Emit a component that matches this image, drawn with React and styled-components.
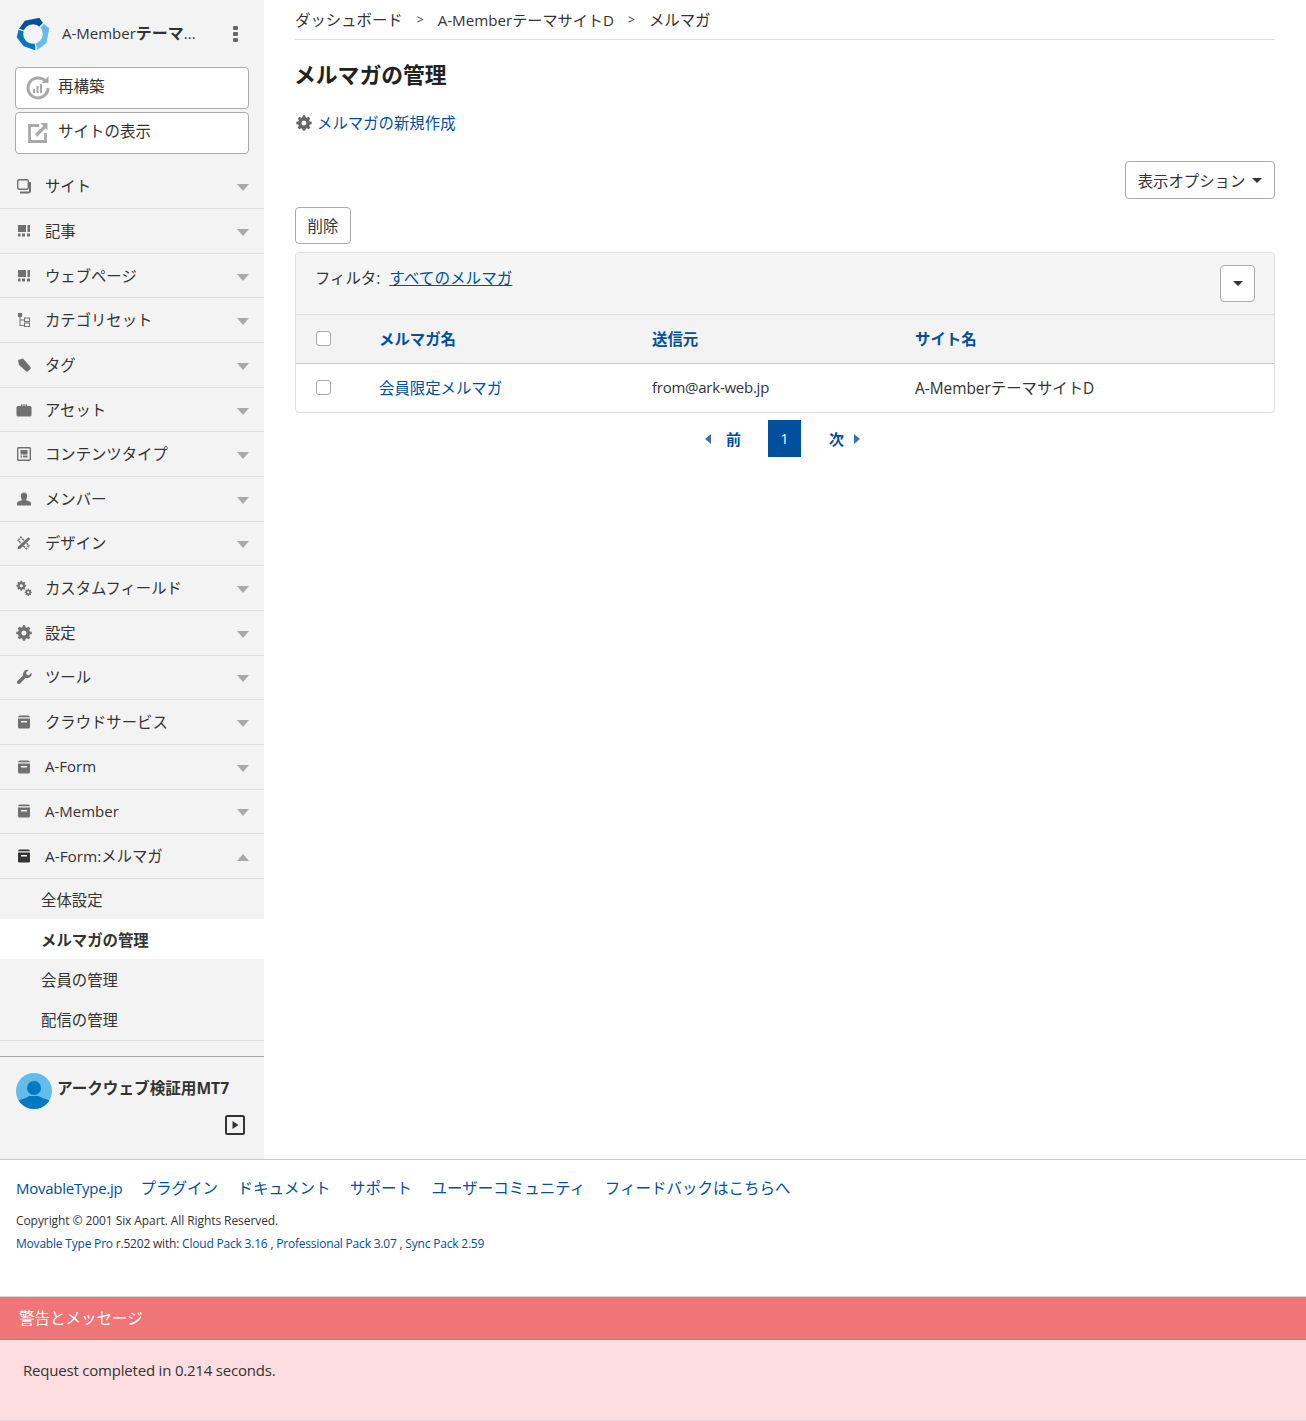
import React from "react";
import styled, { createGlobalStyle } from "styled-components";

const GlobalStyle = createGlobalStyle`
  body {
    margin: 0;
    background: #fff;
    color: #333;
    font-family: "Open Sans", "Noto Sans CJK JP", sans-serif;
    font-size: 15.4px;
  }
  a {
    color: #00509e;
    text-decoration: none;
  }
`;

const NAV_ITEMS = [
  ["サイト", "site"],
  ["記事", "grid"],
  ["ウェブページ", "grid"],
  ["カテゴリセット", "tree"],
  ["タグ", "tag"],
  ["アセット", "case"],
  ["コンテンツタイプ", "ctype"],
  ["メンバー", "user"],
  ["デザイン", "design"],
  ["カスタムフィールド", "gears"],
  ["設定", "gear"],
  ["ツール", "wrench"],
  ["クラウドサービス", "box"],
  ["A-Form", "box"],
  ["A-Member", "box"],
];

const SUB_ITEMS = ["全体設定", "メルマガの管理", "会員の管理", "配信の管理"];

const FOOTER_LINKS = [
  "プラグイン",
  "ドキュメント",
  "サポート",
  "ユーザーコミュニティ",
  "フィードバックはこちらへ",
];

const GEAR =
  "M16 10.2v-2.4l-2-.4a6 6 0 0 0-.5-1.3l1.1-1.7-1.7-1.7-1.7 1.1a6 6 0 0 0-1.3-.5L9.5 1.3H7.1l-.4 2a6 6 0 0 0-1.3.5L3.7 2.7 2 4.4l1.1 1.7a6 6 0 0 0-.5 1.3l-2 .4v2.4l2 .4c.1.5.3.9.5 1.3L2 13.6l1.7 1.7 1.7-1.1c.4.2.8.4 1.3.5l.4 2h2.4l.4-2c.5-.1.9-.3 1.3-.5l1.7 1.1 1.7-1.7-1.1-1.7c.2-.4.4-.8.5-1.3zM8.3 11.5a2.5 2.5 0 1 1 0-5 2.5 2.500 0 0 1 0 5z";

const NavIcon = ({ type, color = "#707070" }) => {
  switch (type) {
    case "site":
      return (
        <svg width="16" height="16" viewBox="0 0 16 16">
          <rect x="1.700" y="1.700" width="10.600" height="9.600" rx="1.500" fill="none" stroke={color} strokeWidth="1.400" />
          <path d="M14 4v9a1.500 1.500 0 0 1-1.500 1.500H4" fill="none" stroke={color} strokeWidth="2" />
        </svg>
      );
    case "grid":
      return (
        <svg width="16" height="16" viewBox="0 0 16 16" fill={color}>
          <rect x="2" y="2" width="8" height="7" />
          <rect x="11.500" y="2" width="2.500" height="7" />
          <rect x="2" y="10.500" width="2.500" height="3" />
          <rect x="6" y="10.500" width="3" height="3" />
          <rect x="11" y="10.500" width="3" height="3" />
        </svg>
      );
    case "tree":
      return (
        <svg width="16" height="16" viewBox="0 0 16 16" fill={color}>
          <rect x="2" y="1" width="4" height="4" />
          <path d="M3.500 5h1v8H8v1H3.500zM4 7.500h4v1H4z" />
          <rect x="8.500" y="6" width="5" height="3.500" fill="none" stroke={color} />
          <rect x="8.500" y="11" width="5" height="3.500" fill="none" stroke={color} />
        </svg>
      );
    case "tag":
      return (
        <svg width="16" height="16" viewBox="0 0 16 16" fill={color}>
          <path d="M2 3l5-1.500 7.500 8.500a1.500 1.500 0 0 1-.2 2l-2.300 2.300a1.500 1.500 0 0 1-2 0L3 8z" />
        </svg>
      );
    case "case":
      return (
        <svg width="16" height="16" viewBox="0 0 16 16" fill={color}>
          <path d="M5 4V2.500h6V4h-1V3.500H6V4z" />
          <rect x="0.500" y="4" width="15" height="10.500" rx="1.500" />
        </svg>
      );
    case "ctype":
      return (
        <svg width="16" height="16" viewBox="0 0 16 16">
          <rect x="1.700" y="1.700" width="12.600" height="12.600" rx="1" fill="none" stroke={color} strokeWidth="1.400" />
          <rect x="4.500" y="4" width="7" height="4.500" fill={color} />
          <rect x="4.500" y="9.500" width="1.500" height="2" fill={color} />
          <rect x="7" y="9.500" width="4.500" height="2" fill={color} />
        </svg>
      );
    case "user":
      return (
        <svg width="16" height="16" viewBox="0 0 16 16" fill={color}>
          <path d="M8 1.500c2 0 3.200 1.500 3.200 3.500S10.300 8 9.800 9c.8.800 4.700 1 5.200 3v2.500H1V12c.5-2 4.400-2.200 5.200-3-.5-1-1.400-2-1.400-4S6 1.500 8 1.500z" />
        </svg>
      );
    case "design":
      return (
        <svg width="16" height="16" viewBox="-1 -1 18 18" fill={color}>
          <path d="M1.500 5l3-3.500 9 9.500-3 3.500z" fill="none" stroke={color} strokeWidth="1.800" strokeDasharray="2.500 1" />
          <path d="M13 1.500l2 2L4 14.500l-3 .5.500-3z" />
        </svg>
      );
    case "gears":
      return (
        <svg width="16" height="16" viewBox="0 0 16 16">
          <g fill={color} transform="scale(.64)"><path d={GEAR} /></g>
          <g fill={color} transform="translate(8.400 8.200) scale(.46)"><path d={GEAR} /></g>
        </svg>
      );
    case "gear":
      return (
        <svg width="16" height="16" viewBox="0.300 1 16 16" fill={color}>
          <path d={GEAR} />
        </svg>
      );
    case "wrench":
      return (
        <svg width="16" height="16" viewBox="0 0 16 16" fill={color}>
          <path d="M15.500 3.800l-2.600 2.500-2.200-.6-.6-2.200L12.600 1a4.300 4.300 0 0 0-5.400 5.300L1.200 12.200a1.900 1.900 0 0 0 2.600 2.600l6-6a4.300 4.300 0 0 0 5.700-5z" />
        </svg>
      );
    default:
      return (
        <svg width="16" height="16" viewBox="0 0 16 16" fill={color}>
          <path d="M4 1.500h8a2 2 0 0 1 2 1.800H2a2 2 0 0 1 2-1.800z" />
          <path d="M2 4.500h12v8.500a1.500 1.500 0 0 1-1.500 1.500h-9A1.500 1.500 0 0 1 2 13zM5 7v1.500h6V7z" fillRule="evenodd" />
        </svg>
      );
  }
};

const Logo = () => (
  <svg width="34" height="34" viewBox="0 0 34 34" stroke="#f3f3f3" strokeWidth="1.300">
    <path d="M17 17L2 12 8.500 3 23.500 0 28 6.500z" fill="#00519e" />
    <path d="M17 17L2 12 0 20.500 7 29.500 19.500 34 21 28z" fill="#0079c1" />
    <path d="M17 17L28 6 34 11 31 26.500 21 34z" fill="#63bcec" />
    <circle cx="17" cy="17" r="9.800" fill="#f3f3f3" stroke="none" />
  </svg>
);

const App = () => (
  <>
    <GlobalStyle />
    <Layout>
      <Sidebar>
        <SiteHeader>
          <Logo />
          <SiteName>
            A-Member<b>テーマ</b>...
          </SiteName>
          <Kebab>
            <i />
            <i />
            <i />
          </Kebab>
        </SiteHeader>
        <SideButton>
          <svg width="26" height="26" viewBox="0 0 26 26" fill="none">
            <path d="M23 13a10 10 0 1 1-3-7.200" stroke="#a9a9a9" strokeWidth="3" />
            <path d="M16.500 8h7V1z" fill="#a9a9a9" />
            <rect x="8" y="14" width="2" height="4" fill="#a9a9a9" />
            <rect x="11.500" y="11" width="2" height="7" fill="#a9a9a9" />
            <rect x="15" y="9" width="2" height="9" fill="#a9a9a9" />
          </svg>
          <SideButtonText>再構築</SideButtonText>
        </SideButton>
        <SideButton>
          <svg width="26" height="26" viewBox="0 0 26 26" fill="none">
            <path d="M14 5.500H4.500v16h16V13" stroke="#a9a9a9" strokeWidth="2.800" />
            <path d="M11 15.500L20 6.500" stroke="#a9a9a9" strokeWidth="3.200" />
            <path d="M15.500 3h7v7z" fill="#a9a9a9" />
          </svg>
          <SideButtonText>サイトの表示</SideButtonText>
        </SideButton>
        <NavList>
          {NAV_ITEMS.map(([label, icon]) => (
            <NavRow key={label}>
              <NavIconBox>
                <NavIcon type={icon} />
              </NavIconBox>
              <NavLabel $latin={label.startsWith("A-")}>{label}</NavLabel>
              <Caret />
            </NavRow>
          ))}
          <NavRow>
            <NavIconBox>
              <NavIcon type="box" color="#333" />
            </NavIconBox>
            <NavLabel>A-Form:メルマガ</NavLabel>
            <Caret $up />
          </NavRow>
        </NavList>
        <SubList>
          {SUB_ITEMS.map((label, i) => (
            <SubItem key={label} $active={i === 1}>
              {label}
            </SubItem>
          ))}
        </SubList>
        <UserBlock>
          <UserRow>
            <svg width="36" height="36" viewBox="0 0 36 36">
              <clipPath id="avatar">
                <circle cx="18" cy="18" r="18" />
              </clipPath>
              <g clipPath="url(#avatar)">
                <rect width="36" height="36" fill="#63bcec" />
                <circle cx="18" cy="15" r="7" fill="#0079c1" />
                <path d="M0 36v-6c2-4 10-4 13-7h10c3 3 11 3 13 7v6z" fill="#0079c1" />
              </g>
            </svg>
            <UserName>アークウェブ検証用MT7</UserName>
          </UserRow>
          <PlayButton>
            <svg width="20" height="20" viewBox="0 0 20 20">
              <rect x="1" y="1" width="18" height="18" rx="1.500" fill="none" stroke="#333" strokeWidth="2" />
              <path d="M7.500 6v8l6-4z" fill="#333" />
            </svg>
          </PlayButton>
        </UserBlock>
      </Sidebar>
      <Main>
        <Breadcrumb>
          <span>ダッシュボード</span>
          <Sep>&gt;</Sep>
          <BreadcrumbSite>A-MemberテーマサイトD</BreadcrumbSite>
          <Sep>&gt;</Sep>
          <span>メルマガ</span>
        </Breadcrumb>
        <Title>メルマガの管理</Title>
        <ActionLink>
          <svg width="16" height="16" viewBox="0.300 1 16 16" fill="#666">
            <path d={GEAR} />
          </svg>
          <a href="#new">メルマガの新規作成</a>
        </ActionLink>
        <OptionsRow>
          <OutlineButton $wide>
            表示オプション
            <DownCaret />
          </OutlineButton>
        </OptionsRow>
        <OutlineButton>削除</OutlineButton>
        <Panel>
          <FilterBar>
            <FilterText>
              フィルタ:<FilterLink href="#all">すべてのメルマガ</FilterLink>
            </FilterText>
            <FilterToggle>
              <DownCaret />
            </FilterToggle>
          </FilterBar>
          <TableHead>
            <CheckCell>
              <CheckBox />
            </CheckCell>
            <NameCell>メルマガ名</NameCell>
            <FromCell>送信元</FromCell>
            <Cell>サイト名</Cell>
          </TableHead>
          <TableRow>
            <CheckCell>
              <CheckBox />
            </CheckCell>
            <NameCell>
              <a href="#item">会員限定メルマガ</a>
            </NameCell>
            <FromCell>
              <Tight>from@ark-web.jp</Tight>
            </FromCell>
            <Cell>A-MemberテーマサイトD</Cell>
          </TableRow>
        </Panel>
        <Pager>
          <PagerPrev>
            <PagerArrow />前
          </PagerPrev>
          <PagerCurrent>1</PagerCurrent>
          <PagerNext>
            次<PagerArrow $right />
          </PagerNext>
        </Pager>
      </Main>
    </Layout>
    <Footer>
      <FooterLinks>
        <FooterBrand href="#f">MovableType.jp</FooterBrand>
        {FOOTER_LINKS.map((label) => (
          <a href="#f" key={label}>
            {label}
          </a>
        ))}
      </FooterLinks>
      <FooterNote $spacing="-0.08px">Copyright © 2001 Six Apart. All Rights Reserved.</FooterNote>
      <FooterNote $spacing="-0.2px">
        <a href="#v">Movable Type Pro</a> r.5202 with: <a href="#c">Cloud Pack 3.16</a> ,{" "}
        <a href="#p">Professional Pack 3.07</a> , <a href="#s">Sync Pack 2.59</a>
      </FooterNote>
    </Footer>
    <AlertHead>
      <AlertTitle>警告とメッセージ</AlertTitle>
    </AlertHead>
    <AlertBody>Request completed in 0.214 seconds.</AlertBody>
  </>
);

export default App;

const Layout = styled.div`
  display: flex;
  height: 1159px;
`;

const Sidebar = styled.aside`
  width: 264px;
  flex: none;
  background: #f3f3f3;
  display: flex;
  flex-direction: column;
`;

const SiteHeader = styled.div`
  height: 67px;
  box-sizing: border-box;
  display: flex;
  align-items: center;
  padding-left: 16px;
  flex: none;
`;

const SiteName = styled.div`
  margin-left: 12px;
  width: 171px;
  padding-bottom: 4px;
  font-size: 15px;
  color: #333;
  white-space: nowrap;
  b {
    font-weight: 700;
    font-size: 16px;
  }
`;

const Kebab = styled.div`
  display: flex;
  flex-direction: column;
  gap: 2px;
  i {
    width: 5px;
    height: 4px;
    background: #666;
    border-radius: 1px;
  }
`;

const SideButton = styled.div`
  width: 234px;
  height: 42px;
  box-sizing: border-box;
  margin: 0 0 3px 15px;
  background: #fff;
  border: 1px solid #a9a9a9;
  border-radius: 4px;
  display: flex;
  align-items: center;
  gap: 7px;
  padding-left: 9px;
  color: #333;
  flex: none;
`;

const SideButtonText = styled.span`
  padding-bottom: 5px;
  font-size: 15.5px;
`;

const NavList = styled.nav`
  margin-top: 7.4px;
`;

const NavRow = styled.div`
  height: 44.67px;
  box-sizing: border-box;
  border-bottom: 1px solid #dfdfdf;
  display: flex;
  align-items: center;
  padding: 0 16px;
`;

const NavIconBox = styled.span`
  width: 16px;
  height: 16px;
  flex: none;
  display: flex;
  svg {
    display: block;
  }
`;

const NavLabel = styled.span`
  margin-left: 13px;
  flex: 1;
  color: #333;
  padding-bottom: ${(p) => (p.$latin ? "1px" : "2px")};
  font-size: ${(p) => (p.$latin ? "15px" : "15.35px")};
`;

const Caret = styled.span`
  width: 0;
  height: 0;
  border-left: 6.5px solid transparent;
  border-right: 6.5px solid transparent;
  ${(p) =>
    p.$up
      ? "border-bottom: 7px solid #a9a9a9;"
      : "border-top: 7px solid #a9a9a9;"}
  margin-top: 3px;
  margin-right: -1px;
`;

const SubList = styled.div`
  border-bottom: 1px solid #dfdfdf;
  padding-bottom: 1px;
`;

const SubItem = styled.div`
  height: 40px;
  box-sizing: border-box;
  padding-top: 2px;
  display: flex;
  align-items: center;
  padding-left: 41px;
  color: #333;
  background: ${(p) => (p.$active ? "#fff" : "transparent")};
  font-weight: ${(p) => (p.$active ? 700 : 400)};
`;

const UserBlock = styled.div`
  margin-top: 15px;
  border-top: 1px solid #a9a9a9;
  padding: 16px 19px 0 16px;
`;

const UserRow = styled.div`
  display: flex;
  align-items: flex-start;
  gap: 5px;
`;

const UserName = styled.div`
  font-weight: 700;
  font-size: 15.6px;
  line-height: 30px;
  color: #333;
`;

const PlayButton = styled.div`
  display: flex;
  justify-content: flex-end;
  margin-top: 6px;
`;

const Main = styled.main`
  flex: 1;
  min-width: 0;
  padding: 0 31px;
`;

const Breadcrumb = styled.div`
  height: 40px;
  box-sizing: border-box;
  border-bottom: 1px solid #dfdfdf;
  display: flex;
  align-items: center;
  color: #333;
`;

const BreadcrumbSite = styled.span`
  font-size: 15.15px;
  padding-bottom: 2px;
`;

const Sep = styled.span`
  margin: 0 14px;
  font-size: 12px;
`;

const Title = styled.h1`
  margin: 18px 0 0 -1px;
  height: 34px;
  line-height: 34px;
  font-size: 21.8px;
  font-weight: 700;
  color: #222;
`;

const ActionLink = styled.div`
  margin-top: 15px;
  display: flex;
  align-items: center;
  gap: 5px;
  height: 30px;
  svg {
    margin: 1px 0 0 1px;
  }
`;

const OptionsRow = styled.div`
  margin-top: 24px;
  margin-bottom: 8px;
  display: flex;
  justify-content: flex-end;
`;

const OutlineButton = styled.div`
  height: ${(p) => (p.$wide ? "38px" : "37px")};
  width: ${(p) => (p.$wide ? "150px" : "56px")};
  box-sizing: border-box;
  border: 1px solid #a9a9a9;
  border-radius: 4px;
  background: #fff;
  display: flex;
  align-items: center;
  justify-content: center;
  gap: 7px;
  color: #333;
`;

const DownCaret = styled.span`
  width: 0;
  height: 0;
  border-left: 5px solid transparent;
  border-right: 5px solid transparent;
  border-top: 5px solid #333;
`;

const Panel = styled.div`
  margin-top: 8px;
  border: 1px solid #dfdfdf;
  border-radius: 4px;
  overflow: hidden;
`;

const FilterBar = styled.div`
  height: 62px;
  box-sizing: border-box;
  background: #f5f5f5;
  border-bottom: 1px solid #dfdfdf;
  display: flex;
  justify-content: space-between;
  padding: 12px 19px 0 19px;
`;

const FilterText = styled.div`
  line-height: 26px;
  color: #333;
`;

const FilterLink = styled.a`
  margin-left: 9px;
  font-size: 15.6px;
  text-decoration: underline;
`;

const FilterToggle = styled.div`
  width: 35px;
  height: 37px;
  box-sizing: border-box;
  border: 1px solid #a9a9a9;
  border-radius: 4px;
  background: #fff;
  display: flex;
  align-items: center;
  justify-content: center;
`;

const TableRow = styled.div`
  height: 48px;
  box-sizing: border-box;
  padding-bottom: 1px;
  display: flex;
  align-items: center;
`;

const TableHead = styled(TableRow)`
  height: 49px;
  padding-bottom: 2px;
  background: #f3f3f3;
  border-bottom: 1px solid #c9c9c9;
  color: #00509e;
  font-weight: 700;
`;

const Cell = styled.div`
  flex: 1;
`;

const CheckCell = styled.div`
  width: 83px;
  padding-left: 20px;
  box-sizing: border-box;
  display: flex;
`;

const NameCell = styled.div`
  width: 273px;
`;

const FromCell = styled.div`
  width: 263px;
`;

const Tight = styled.span`
  letter-spacing: -0.25px;
  font-size: 15px;
`;

const CheckBox = styled.span`
  width: 13px;
  height: 13px;
  background: #fff;
  border: 1px solid #a9a9a9;
  border-radius: 3px;
`;

const Pager = styled.div`
  margin-top: 7px;
  padding-right: 1px;
  display: grid;
  grid-template-columns: 1fr 33px 1fr;
  align-items: center;
  color: #00509e;
  font-weight: 700;
  font-size: 15px;
`;

const PagerPrev = styled.span`
  display: flex;
  align-items: center;
  justify-content: flex-end;
  gap: 15px;
  margin-right: 27px;
`;

const PagerNext = styled.span`
  display: flex;
  align-items: center;
  gap: 10px;
  margin-left: 28px;
`;

const PagerArrow = styled.span`
  width: 0;
  height: 0;
  border-top: 5px solid transparent;
  border-bottom: 5px solid transparent;
  ${(p) =>
    p.$right
      ? "border-left: 6px solid #3b6fb0;"
      : "border-right: 6px solid #3b6fb0;"}
`;

const PagerCurrent = styled.span`
  height: 37px;
  background: #00509e;
  color: #fff;
  font-weight: 400;
  font-size: 14px;
  display: flex;
  align-items: center;
  justify-content: center;
`;

const Footer = styled.footer`
  height: 137px;
  box-sizing: border-box;
  border-top: 1px solid #c9c9c9;
  padding: 16px 16px 0;
`;

const FooterLinks = styled.div`
  display: flex;
  gap: 19.5px;
  line-height: 24px;
  margin-bottom: 9px;
  font-size: 15.5px;
`;

const FooterBrand = styled.a`
  font-size: 15px;
  letter-spacing: -0.25px;
  margin-right: -1.5px;
`;

const FooterNote = styled.div`
  font-size: 12px;
  line-height: 23px;
  color: #333;
  letter-spacing: ${(p) => p.$spacing};
`;

const AlertHead = styled.div`
  height: 44px;
  box-sizing: border-box;
  background: #ef7577;
  border-top: 1px solid #d9d9d9;
  border-bottom: 1px solid #d96a6c;
  color: #fff;
  padding-left: 19px;
  display: flex;
  align-items: center;
`;

const AlertTitle = styled.span`
  padding-bottom: 2px;
  font-size: 15.5px;
`;

const AlertBody = styled.div`
  height: 81px;
  box-sizing: border-box;
  background: #fddde0;
  border-bottom: 1px solid #d9d9d9;
  color: #333;
  padding: 20px 23px 0;
  line-height: 21px;
  font-size: 15px;
  letter-spacing: -0.2px;
`;
